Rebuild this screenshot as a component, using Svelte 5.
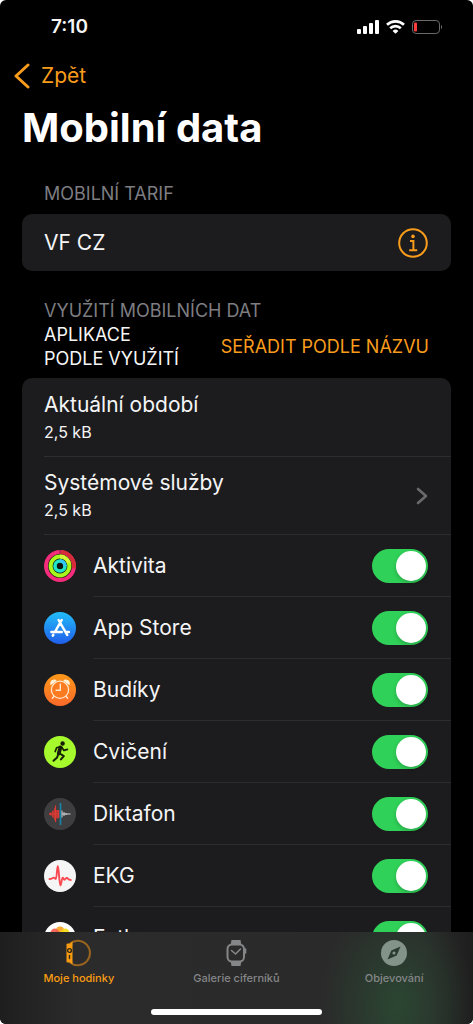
<!--
  Cellular data settings for the paired watch: plan, usage and per-app switches.
-->
<script lang="ts">
  type AppIcon = 'activity' | 'store' | 'alarm' | 'workout' | 'recorder' | 'ecg' | 'photos';
  type WatchApp = { icon: AppIcon; name: string; enabled: boolean };
  type Tab = { id: string; label: string };

  let apps = $state<WatchApp[]>([
    { icon: 'activity', name: 'Aktivita', enabled: true },
    { icon: 'store', name: 'App Store', enabled: true },
    { icon: 'alarm', name: 'Budíky', enabled: true },
    { icon: 'workout', name: 'Cvičení', enabled: true },
    { icon: 'recorder', name: 'Diktafon', enabled: true },
    { icon: 'ecg', name: 'EKG', enabled: true },
    { icon: 'photos', name: 'Fotky', enabled: true }
  ]);

  const tabs: Tab[] = [
    { id: 'watch', label: 'Moje hodinky' },
    { id: 'gallery', label: 'Galerie ciferníků' },
    { id: 'discover', label: 'Objevování' }
  ];
  let activeTab = $state('watch');

  const petals = [
    { angle: 0, color: '#f7a01d' },
    { angle: 45, color: '#f5d90f' },
    { angle: 90, color: '#b4d335' },
    { angle: 135, color: '#5fbf77' },
    { angle: 180, color: '#5b9bd5' },
    { angle: 225, color: '#8d78c0' },
    { angle: 270, color: '#d673a0' },
    { angle: 315, color: '#f0584a' }
  ];
</script>

<div class="screen">
  <div class="status-bar">
    <span class="time">7:10</span>
    <div class="status-icons">
      <svg width="22" height="14" viewBox="0 0 22 14" fill="#fff" aria-hidden="true">
        <rect x="0" y="9" width="4" height="5" rx="1" />
        <rect x="6" y="6" width="4" height="8" rx="1" />
        <rect x="12" y="3" width="4" height="11" rx="1" />
        <rect x="18" y="0" width="4" height="14" rx="1" />
      </svg>
      <svg width="19" height="14" viewBox="0 0 19 14" fill="none" stroke="#fff" stroke-width="2.6" aria-hidden="true">
        <path d="M1 4.8a12.2 12.2 0 0 1 17 0" />
        <path d="M4.2 8.3a7.6 7.6 0 0 1 10.6 0" />
        <path d="M9.5 13.8 6.6 11a4.2 4.2 0 0 1 5.8 0z" fill="#fff" stroke="none" />
      </svg>
      <svg width="30" height="14" viewBox="0 0 30 14" aria-hidden="true">
        <rect x=".5" y=".5" width="27" height="13" rx="3.6" fill="none" stroke="#6b6b6d" />
        <rect x="2" y="2.5" width="3" height="9" rx="1.2" fill="#fb3c3c" />
        <path d="M29 5v4q1-.6 1-2t-1-2z" fill="#77777a" />
      </svg>
    </div>
  </div>

  <header class="nav-header">
    <button type="button" class="back-button">
      <svg width="16" height="26" viewBox="0 0 16 26" fill="none" stroke="currentColor" stroke-width="3" stroke-linecap="round" stroke-linejoin="round" aria-hidden="true">
        <path d="M14 2 2 13l12 11" />
      </svg>
      Zpět
    </button>
    <h1>Mobilní data</h1>
  </header>

  <main>
    <section class="plan">
      <h2>MOBILNÍ TARIF</h2>
      <div class="card plan-row">
        <span>VF CZ</span>
        <button type="button" class="info-button" aria-label="Informace o tarifu">
          <svg width="30" height="30" viewBox="0 0 30 30" fill="none" stroke="currentColor" stroke-width="2" aria-hidden="true">
            <circle cx="15" cy="15" r="13.8" />
            <circle cx="15" cy="8.4" r="1.8" fill="currentColor" stroke="none" />
            <path d="M12 13h3.4v9M11.2 22.3h8" />
          </svg>
        </button>
      </div>
    </section>

    <section class="usage">
      <h2>VYUŽITÍ MOBILNÍCH DAT</h2>
      <div class="sort-row">
        <p>APLIKACE<br />PODLE VYUŽITÍ</p>
        <button type="button">SEŘADIT PODLE NÁZVU</button>
      </div>

      <div class="card usage-card">
        <div class="usage-row">
          <div class="usage-text">
            <span>Aktuální období</span>
            <small>2,5 kB</small>
          </div>
        </div>
        <a href="#system" class="usage-row">
          <div class="usage-text">
            <span>Systémové služby</span>
            <small>2,5 kB</small>
          </div>
          <svg width="12" height="18" viewBox="0 0 12 18" fill="none" stroke="#6a6a6e" stroke-width="2.6" stroke-linecap="round" stroke-linejoin="round" aria-hidden="true">
            <path d="m2 2 8 7-8 7" />
          </svg>
        </a>

        {#each apps as app (app.icon)}
          <label class="app-row">
            <svg class="app-icon" viewBox="0 0 32 32" aria-hidden="true">
              {#if app.icon === 'activity'}
                <circle cx="16" cy="16" r="16" fill="#10140f" />
                <g fill="none" stroke-width="4">
                  <circle cx="16" cy="16" r="14" stroke="#f32d7c" />
                  <path d="M17 2a14 14 0 0 1 12.8 16.5" stroke="#d52c38" />
                  <circle cx="16" cy="16" r="9.4" stroke="#a8f61c" />
                  <path d="M16 6.6A9.4 9.4 0 0 1 25 13" stroke="#d5f634" />
                  <circle cx="16" cy="16" r="5" stroke="#20e5c8" stroke-width="3.6" />
                  <path d="M16 11a5 5 0 0 1 5 5" stroke="#32c8f2" stroke-width="3.6" />
                </g>
                <path d="M16 0v4" stroke="#861b3b" />
              {:else if app.icon === 'store'}
                <defs>
                  <linearGradient id="store-fill" x2="0" y2="1">
                    <stop stop-color="#22bdfa" />
                    <stop offset="1" stop-color="#205eea" />
                  </linearGradient>
                </defs>
                <circle cx="16" cy="16" r="16" fill="url(#store-fill)" />
                <g fill="none" stroke="#fff" stroke-width="2.5" stroke-linecap="round">
                  <path d="m14.6 8 8.600 15M17.700 8l-6.800 12M7.400 20h10.400M22.400 20h2.500M9.300 22.800l-.5.9" />
                </g>
              {:else if app.icon === 'alarm'}
                <defs>
                  <linearGradient id="alarm-fill" x2="0" y2="1">
                    <stop stop-color="#fb9819" />
                    <stop offset="1" stop-color="#fa6a2a" />
                  </linearGradient>
                </defs>
                <circle cx="16" cy="16" r="16" fill="url(#alarm-fill)" />
                <path d="M6.4 11.2q-.9-3.800 2-5.200 2.600-1.300 4.300.7zM25.600 11.200q.9-3.800-2-5.200-2.600-1.300-4.300.7z" fill="#fff3dc" />
                <circle cx="16" cy="15.8" r="8.6" fill="#fa7b20" stroke="#ffe7cb" stroke-width="1.3" />
                <path d="M16.300 10v6.200h-4.200M10 22.300l-1.700 1.900M22 22.300l1.700 1.900" fill="none" stroke="#ffe7cb" stroke-width="1.4" stroke-linecap="round" />
              {:else if app.icon === 'workout'}
                <circle cx="16" cy="16" r="16" fill="#a5f92d" />
                <circle cx="18.6" cy="7.5" r="2.2" fill="#172006" />
                <g fill="none" stroke="#172006" stroke-linecap="round" stroke-linejoin="round">
                  <path d="m16.400 11.500-1.700 6" stroke-width="3.8" />
                  <path d="m16 10.700-3.400 1-1.400 3.800M17.700 11.200l2.300 3.200 3.400-1" stroke-width="1.7" />
                  <path d="m15.800 17.500 4 2.700-2.900 3.200M14.300 18l-1.200 3.400-3.600 3.400" stroke-width="2" />
                </g>
              {:else if app.icon === 'recorder'}
                <circle cx="16" cy="16" r="16" fill="#3e3e40" />
                <path d="M5 16h10M7 14.500v3M9 12.400v7.200M11 10v12M13 12v8.400" stroke="#ca3932" stroke-width="1.8" />
                <path d="M11.500 7.400V24M14.600 12v8" stroke="#df3b36" stroke-width="1.2" />
                <path d="M16.500 5v22" stroke="#1784a7" stroke-width="1.7" />
                <path d="M18 12.500v7M20 14v4M22 15v2M18 16h8.500" stroke="#d3d3d4" stroke-width="1" />
              {:else if app.icon === 'ecg'}
                <circle cx="16" cy="16" r="16" fill="#f5f5f6" />
                <path d="M5.500 19c2.700.2 3-1.600 4.500-1.200 1.200.2 1.300 1.200 1.800 1.200 1 0 1.200-13 2-13 1 0 1.500 19.400 2.600 19.400.9 0 1.300-7.600 2.300-7.600.8 0 .8 2 1.800 1.900 1-.1 1.200-2.300 2.500-1.800.9.4 1.200 2.100 3.800 2.100" fill="none" stroke="#fb4b52" stroke-width="1.900" stroke-linecap="round" stroke-linejoin="round" />
              {:else}
                <circle cx="16" cy="16" r="16" fill="#fff" />
                {#each petals as petal}
                  <rect x="12" y="4.500" width="8" height="11.500" rx="4" fill={petal.color} opacity=".9" transform={`rotate(${petal.angle} 16 16)`} />
                {/each}
              {/if}
            </svg>
            <span class="app-line">
              {app.name}
              <input type="checkbox" role="switch" bind:checked={app.enabled} />
            </span>
          </label>
        {/each}
      </div>
    </section>
  </main>

  <nav class="tab-bar">
    <div class="tabs">
      {#each tabs as tab (tab.id)}
        <button type="button" class="tab" class:active={activeTab === tab.id} onclick={() => (activeTab = tab.id)}>
          <svg width="28" height="28" viewBox="0 0 28 28" aria-hidden="true">
            {#if tab.id === 'watch'}
              <path d="M5 4.600a12.200 12.200 0 1 1 0 18.800" fill="none" stroke="#96641e" stroke-width="2" />
              <path d="M1.500 5.500q0-1 1-1h4q1 0 1 1v17q0 1-1 1h-4q-1 0-1-1z" fill="#f99c12" />
              <path d="m4.500 5 3-2.500v3zM4.500 23l3 2.500v-3z" fill="#f99c12" />
              <circle cx="4.500" cy="11.500" r="1.900" fill="#f99c12" stroke="#302615" stroke-width="1.400" />
              <path d="M4.500 16.500v3" stroke="#302615" stroke-width="1.400" stroke-linecap="round" />
            {:else if tab.id === 'gallery'}
              <path d="M8.500 6.500 9.500 1h9l1 5.500zM8.500 21.500l1 5.500h9l1-5.500z" fill="currentColor" />
              <rect x="5.500" y="5.500" width="16.500" height="17" rx="4.500" fill="#2b2b2b" stroke="currentColor" stroke-width="2" />
              <path d="M23.500 10v4" stroke="currentColor" stroke-width="1.600" stroke-linecap="round" />
              <path d="m9.500 11.500 4 3.500 5-5" fill="none" stroke="currentColor" stroke-width="1.600" stroke-linecap="round" stroke-linejoin="round" />
            {:else}
              <circle cx="14" cy="14" r="13" fill="#84938a" />
              <path d="m20.500 7.500-3.800 9-9.200 4 3.800-9z" fill="#2b3a30" />
              <circle cx="14" cy="14" r="1.600" fill="#84938a" />
            {/if}
          </svg>
          {tab.label}
        </button>
      {/each}
    </div>
    <div class="home-indicator"></div>
  </nav>
</div>

<style>
  :global(body) {
    margin: 0;
    background: #fff;
  }

  .screen {
    display: flex;
    flex-direction: column;
    height: 100vh;
    overflow: hidden;
    border-radius: 6px;
    background: #000;
    color: #f5f5f6;
    font-family: Inter, 'Liberation Sans', sans-serif;
    font-size: 21px;
    line-height: 26px;
  }

  button {
    padding: 0;
    border: 0;
    background: none;
    color: #f99c1c;
    font: inherit;
    cursor: pointer;
  }

  h1,
  h2,
  p {
    margin: 0;
  }

  .status-bar {
    display: flex;
    flex: none;
    align-items: center;
    justify-content: space-between;
    height: 54px;
    padding: 0 31px 0 51px;
  }

  .time {
    font-size: 19px;
    font-weight: 600;
  }

  .status-icons {
    display: flex;
    gap: 7px;
  }

  .nav-header {
    flex: none;
    padding: 0 14px;
  }

  .back-button {
    display: flex;
    align-items: center;
    gap: 11px;
    height: 43px;
  }

  h1 {
    padding: 6px 8px;
    color: #fff;
    font-size: 40px;
    font-weight: 700;
    line-height: 50px;
  }

  main {
    flex: 1;
    min-height: 0;
    padding: 23px 22px 0;
    overflow: hidden;
  }

  h2 {
    padding: 0 22px;
    color: #7d7d82;
    font-size: 18px;
    font-weight: 400;
    line-height: 24px;
  }

  .card {
    overflow: hidden;
    border-radius: 10px;
    background: #1c1c1e;
  }

  .plan-row {
    display: flex;
    align-items: center;
    justify-content: space-between;
    height: 57px;
    margin-top: 8px;
    padding: 0 23px 0 22px;
  }

  .info-button,
  .info-button svg {
    display: block;
  }

  .usage {
    margin-top: 28px;
  }

  .usage-card {
    padding-top: 1px;
  }

  .sort-row {
    display: flex;
    align-items: center;
    justify-content: space-between;
    margin-bottom: 7px;
    padding: 0 22px;
    font-size: 18px;
    line-height: 24px;
  }

  .usage-row {
    display: flex;
    align-items: center;
    justify-content: space-between;
    height: 77px;
    margin-left: 22px;
    padding-right: 23px;
    border-bottom: 1px solid #2d2d30;
    color: inherit;
    text-decoration: none;
  }

  .usage-text {
    display: flex;
    flex-direction: column;
    gap: 3px;
  }

  .usage-text small {
    font-size: 16px;
    line-height: 22px;
  }

  .app-row {
    display: flex;
    align-items: center;
    gap: 17px;
    padding-left: 22px;
  }

  .app-icon {
    flex: none;
    width: 32px;
    height: 32px;
  }

  .app-line {
    display: flex;
    flex: 1;
    align-items: center;
    justify-content: space-between;
    height: 61px;
    padding-right: 23px;
    border-bottom: 1px solid #2d2d30;
  }

  input {
    width: 56px;
    height: 34px;
    margin: 0;
    padding: 2px;
    box-sizing: border-box;
    border-radius: 17px;
    background: #39393d;
    appearance: none;
  }

  input::before {
    display: block;
    width: 30px;
    height: 30px;
    border-radius: 50%;
    background: #fff;
    box-shadow: 0 2px 4px rgb(0 0 0 / 20%);
    content: '';
  }

  input:checked {
    background: #30d158;
  }

  input:checked::before {
    margin-left: auto;
  }

  .tab-bar {
    display: flex;
    flex: none;
    flex-direction: column;
    align-items: center;
    justify-content: space-between;
    height: 92px;
    background:
      radial-gradient(ellipse 76px 110px at 84% 80%, #2b4632, transparent),
      linear-gradient(90deg, #1e1e1e, #2b2b2b 16%, #2a2a2a 90%, #1e1e1e);
  }

  .tabs {
    display: grid;
    grid-template-columns: repeat(3, 1fr);
    width: 100%;
    padding-top: 7px;
  }

  .tab {
    display: flex;
    flex-direction: column;
    align-items: center;
    gap: 3px;
    color: #858688;
    font-size: 11px;
    font-weight: 500;
    line-height: 16px;
  }

  .tab.active {
    color: #f99c12;
  }

  .home-indicator {
    width: 36%;
    height: 6px;
    margin-bottom: 9px;
    border-radius: 3px;
    background: #fff;
  }
</style>
